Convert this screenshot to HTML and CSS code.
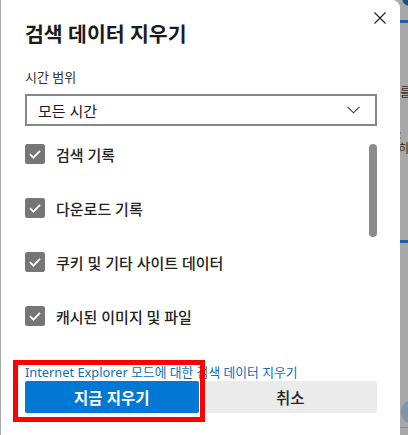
FILE: index.html
```html
<!DOCTYPE html>
<html lang="ko">
<head>
    <meta charset="UTF-8">
    <meta name="viewport" content="width=device-width, initial-scale=1.0">
    <title>검색 데이터 지우기</title>
    <link rel="stylesheet" href="styles.css">
</head>
<body>
    <!-- 뒤에 깔린 설정 페이지 (어둡게 가려짐) -->
    <div class="page-behind">
        <span class="bg-dot"></span>
        <span class="bg-stripe stripe-top"></span>
        <span class="bg-text text-a">를</span>
        <span class="bg-text text-b">:히</span>
        <span class="bg-stripe stripe-mid"></span>
        <span class="bg-avatar"></span>
        <span class="bg-line"></span>
    </div>

    <div class="dialog">
        <button class="close-btn" aria-label="닫기">
            <svg width="12" height="12" viewBox="0 0 12 12">
                <path d="M0.5 0.5 L11.5 11.5 M11.5 0.5 L0.5 11.5" stroke="#1f1f1f" stroke-width="1.1" fill="none"/>
            </svg>
        </button>

        <h1 class="title">검색 데이터 지우기</h1>

        <label class="field-label">시간 범위</label>
        <div class="select">
            <span>모든 시간</span>
            <svg width="13" height="8" viewBox="0 0 13 8">
                <path d="M0.5 0.8 L6.5 6.8 L12.5 0.8" stroke="#3a3a3a" stroke-width="1.1" fill="none"/>
            </svg>
        </div>

        <!-- 삭제할 항목 목록 -->
        <div class="options">
            <div class="option">
                <svg class="check" width="20" height="20" viewBox="0 0 20 20"><rect width="20" height="20" rx="2.5" fill="#767676"/><path d="M5 10.2 L8.4 13.6 L15 6.8" stroke="#fff" stroke-width="1.8" fill="none"/></svg>
                <span>검색 기록</span>
            </div>
            <div class="option">
                <svg class="check" width="20" height="20" viewBox="0 0 20 20"><rect width="20" height="20" rx="2.5" fill="#767676"/><path d="M5 10.2 L8.4 13.6 L15 6.8" stroke="#fff" stroke-width="1.8" fill="none"/></svg>
                <span>다운로드 기록</span>
            </div>
            <div class="option">
                <svg class="check" width="20" height="20" viewBox="0 0 20 20"><rect width="20" height="20" rx="2.5" fill="#767676"/><path d="M5 10.2 L8.4 13.6 L15 6.8" stroke="#fff" stroke-width="1.8" fill="none"/></svg>
                <span>쿠키 및 기타 사이트 데이터</span>
            </div>
            <div class="option">
                <svg class="check" width="20" height="20" viewBox="0 0 20 20"><rect width="20" height="20" rx="2.5" fill="#767676"/><path d="M5 10.2 L8.4 13.6 L15 6.8" stroke="#fff" stroke-width="1.8" fill="none"/></svg>
                <span>캐시된 이미지 및 파일</span>
            </div>
            <div class="scroll-thumb"></div>
        </div>

        <a class="ie-link" href="#">Internet Explorer 모드에 대한 검색 데이터 지우기</a>

        <div class="actions">
            <button class="btn btn-primary">지금 지우기</button>
            <button class="btn btn-secondary">취소</button>
        </div>

        <!-- 강조 표시 -->
        <div class="highlight"></div>
    </div>
</body>
</html>
```

FILE: styles.css
```css
body {
    margin: 0;
    height: 435px;
    overflow: hidden;
    background: #a8a8a8;
    font-family: "Noto Sans", "Noto Sans CJK KR", sans-serif;
    color: #1b1b1b;
}

/* 뒷 페이지 */
.page-behind {
    position: absolute;
    top: 0;
    right: 0;
    width: 8px;
    height: 435px;
    overflow: hidden;
}

.bg-dot {
    position: absolute;
    top: -10px;
    left: 2px;
    width: 16px;
    height: 16px;
    border-radius: 50%;
    background: #1f4f85;
}

.bg-stripe {
    position: absolute;
    left: 0;
    width: 8px;
    height: 3px;
    background: #1f5fa3;
}

.stripe-top { top: 20px; }
.stripe-mid { top: 240px; }

.bg-text {
    position: absolute;
    left: 0;
    font-size: 12px;
    line-height: 14px;
    color: #3a2f22;
}

.text-a { top: 86px; }
.text-b { top: 128px; left: -2px; }

.bg-avatar {
    position: absolute;
    top: 400px;
    left: 1px;
    width: 24px;
    height: 24px;
    border-radius: 50%;
    background: #7e95ab;
}

.bg-line {
    position: absolute;
    top: 427px;
    left: 0;
    width: 8px;
    height: 1px;
    background: #8d8d8d;
}

/* 대화 상자 */
.dialog {
    position: relative;
    margin-left: 1px;
    width: 399px;
    height: 435px;
    box-sizing: border-box;
    padding: 20px 23px 0 24px;
    background: #fff;
    border-radius: 0 8px 0 0;
}

.close-btn {
    position: absolute;
    top: 12px;
    right: 14px;
    padding: 0;
    border: none;
    background: none;
    width: 12px;
    height: 12px;
    display: flex;
}

.title {
    margin: 0;
    font-size: 20.5px;
    line-height: 28px;
    font-weight: 700;
    color: #1b1b1b;
}

.field-label {
    display: block;
    margin-top: 20px;
    font-size: 13px;
    line-height: 18px;
    color: #333;
}

.select {
    margin-top: 8px;
    height: 32px;
    box-sizing: border-box;
    border: 2px solid #878787;
    display: flex;
    align-items: center;
    justify-content: space-between;
    padding: 0 15px 0 11px;
    font-size: 15px;
    color: #1b1b1b;
}

.options {
    position: relative;
    margin-top: 1px;
    height: 232px;
}

.option {
    height: 54px;
    display: flex;
    align-items: center;
    gap: 11px;
    font-size: 15px;
    font-weight: 500;
    color: #222;
}

.check {
    flex: none;
}

.scroll-thumb {
    position: absolute;
    top: 17px;
    right: 0;
    width: 8px;
    height: 93px;
    border-radius: 4px;
    background: #8c8c8c;
}

.ie-link {
    display: block;
    margin-top: 5px;
    font-size: 12.8px;
    line-height: 16px;
    color: #0f6cbd;
    text-decoration: none;
    white-space: nowrap;
}

.actions {
    margin-top: 1px;
    display: flex;
    gap: 5px;
}

.btn {
    flex: 1;
    height: 32px;
    border: none;
    border-radius: 2px;
    font-family: inherit;
    font-size: 15.5px;
}

.btn-primary {
    background: #0078d4;
    color: #fff;
    font-weight: 700;
}

.btn-secondary {
    background: #ebebeb;
    color: #262626;
    font-weight: 500;
}

.highlight {
    position: absolute;
    left: 12px;
    top: 360px;
    width: 192px;
    height: 62px;
    box-sizing: border-box;
    border: 5px solid #ff0000;
}
```
